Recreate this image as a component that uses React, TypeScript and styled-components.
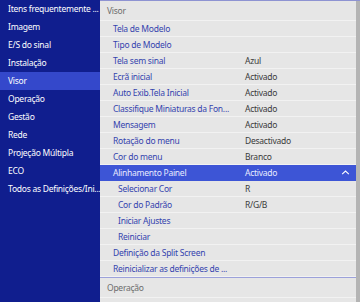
import styled, { createGlobalStyle } from "styled-components";

const GlobalStyle = createGlobalStyle`
  html, body {
    margin: 0;
    padding: 0;
    background: #e6e6e6;
  }
  body {
    font-family: "Noto Sans", "Open Sans", sans-serif;
    font-size: 8.5px;
    letter-spacing: -0.25px;
  }
`;

const sideItems = [
  "Itens frequentemente ...",
  "Imagem",
  "E/S do sinal",
  "Instalação",
  "Visor",
  "Operação",
  "Gestão",
  "Rede",
  "Projeção Múltipla",
  "ECO",
  "Todos as Definições/Ini...",
];

interface Row {
  name: string;
  value?: string;
  sub?: boolean;
  active?: boolean;
}

const visorRows: Row[] = [
  { name: "Tela de Modelo" },
  { name: "Tipo de Modelo" },
  { name: "Tela sem sinal", value: "Azul" },
  { name: "Ecrã inicial", value: "Activado" },
  { name: "Auto Exib.Tela Inicial", value: "Activado" },
  { name: "Classifique Miniaturas da Fon...", value: "Activado" },
  { name: "Mensagem", value: "Activado" },
  { name: "Rotação do menu", value: "Desactivado" },
  { name: "Cor do menu", value: "Branco" },
  { name: "Alinhamento Painel", value: "Activado", active: true },
  { name: "Selecionar Cor", value: "R", sub: true },
  { name: "Cor do Padrão", value: "R/G/B", sub: true },
  { name: "Iniciar Ajustes", sub: true },
  { name: "Reiniciar", sub: true },
  { name: "Definição da Split Screen" },
  { name: "Reinicializar as definições de ..." },
];

const App = () => {
  return (
    <>
      <GlobalStyle />
      <Screen>
        <Sidebar>
          {sideItems.map((item) => (
            <SideItem key={item} $active={item === "Visor"}>
              {item}
            </SideItem>
          ))}
        </Sidebar>
        <Panel>
          <List>
            <Section>
              <SectionTitle>Visor</SectionTitle>
              {visorRows.map((row) => (
                <ItemRow key={row.name} $active={row.active}>
                  <ItemName $sub={row.sub} $active={row.active}>
                    {row.name}
                  </ItemName>
                  <ItemValue $active={row.active}>{row.value}</ItemValue>
                  {row.active && (
                    <Chevron viewBox="0 0 10 6">
                      <path d="M1 5 L5 1.3 L9 5" />
                    </Chevron>
                  )}
                </ItemRow>
              ))}
            </Section>
            <Section $divided>
              <SectionTitle>Operação</SectionTitle>
              <ItemRow>
                <ItemName>Duração Ecrã Ativo</ItemName>
                <ItemValue>Activado</ItemValue>
              </ItemRow>
            </Section>
          </List>
          <Scrollbar />
        </Panel>
      </Screen>
    </>
  );
};

export default App;

const Screen = styled.div`
  display: flex;
  width: 360px;
  height: 302px;
  overflow: hidden;
`;

const Sidebar = styled.div`
  width: 100px;
  flex-shrink: 0;
  background: #101e8e;
`;

const SideItem = styled.div<{ $active?: boolean }>`
  height: 18px;
  line-height: 18px;
  padding-left: 8px;
  color: #ffffff;
  white-space: nowrap;
  overflow: hidden;
  background: ${({ $active }) => ($active ? "#3448cb" : "transparent")};
`;

const Panel = styled.div`
  flex: 1;
  display: flex;
  background: #e6e6e6;
  border-top: 1px solid #8e93d2;
  overflow: hidden;
`;

const List = styled.div`
  flex: 1;
  display: flex;
  flex-direction: column;
`;

const Section = styled.div<{ $divided?: boolean }>`
  border-top: ${({ $divided }) => ($divided ? "1px solid #9ca1da" : "none")};
`;

const SectionTitle = styled.div`
  height: 19px;
  line-height: 19px;
  padding-left: 7px;
  color: #6c6c6c;
  border-bottom: 1px solid #f2f2f2;
`;

const ItemRow = styled.div<{ $active?: boolean }>`
  position: relative;
  display: flex;
  align-items: center;
  height: 15px;
  border-bottom: 1px solid ${({ $active }) => ($active ? "#3d55d6" : "#f2f2f2")};
  background: ${({ $active }) => ($active ? "#3d55d6" : "transparent")};
`;

const ItemName = styled.div<{ $sub?: boolean; $active?: boolean }>`
  width: 132px;
  flex-shrink: 0;
  padding-left: ${({ $sub }) => ($sub ? "18px" : "13px")};
  box-sizing: border-box;
  white-space: nowrap;
  overflow: hidden;
  color: ${({ $active }) => ($active ? "#e8ebff" : "#3443ae")};
`;

const ItemValue = styled.div<{ $active?: boolean }>`
  padding-left: 13px;
  white-space: nowrap;
  color: ${({ $active }) => ($active ? "#e8ebff" : "#3a3a3a")};
`;

const Chevron = styled.svg`
  position: absolute;
  right: 6px;
  top: 5px;
  width: 9px;
  height: 5px;
  fill: none;
  stroke: #ffffff;
  stroke-width: 1.3;
`;

const Scrollbar = styled.div`
  width: 4px;
  flex-shrink: 0;
  background: #b4b4b4;
`;
